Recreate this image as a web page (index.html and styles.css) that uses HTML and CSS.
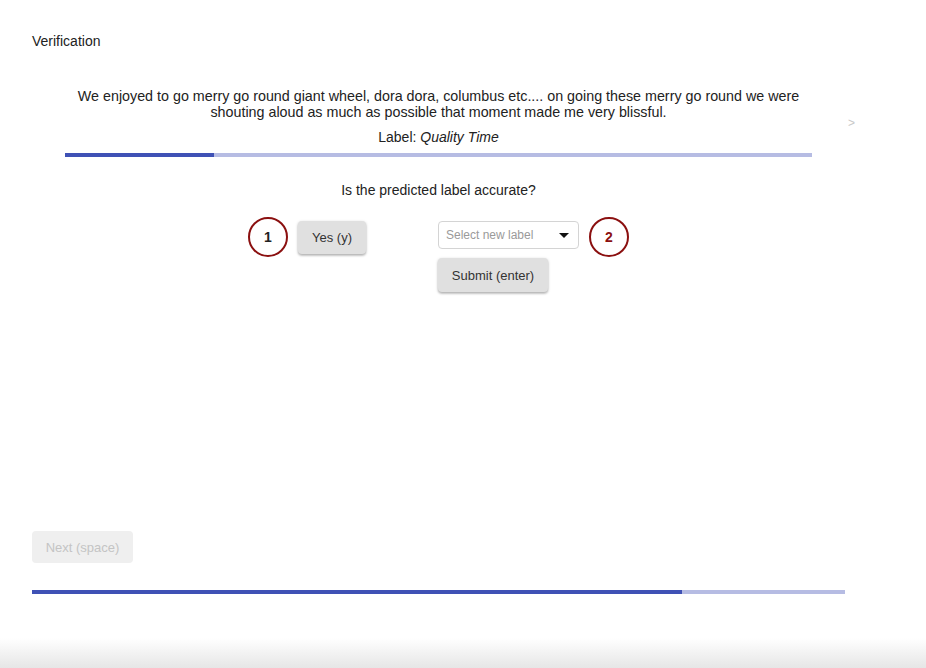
FILE: index.html
```html
<!DOCTYPE html>
<html>
<head>
<meta charset="utf-8">
<link rel="stylesheet" href="styles.css">
</head>
<body>
<div class="page">
  <div class="title">Verification</div>
  <div class="card">
    <p class="text">We enjoyed to go merry go round giant wheel, dora dora, columbus etc.... on going these merry go round we were shouting aloud as much as possible that moment made me very blissful.</p>
    <p class="label">Label: <em>Quality Time</em></p>
    <div class="bar inner"><div class="fill" style="width:20%"></div></div>
    <span class="arrow">&gt;</span>
    <p class="question">Is the predicted label accurate?</p>
    <div class="actions">
      <div class="group">
        <div class="badge">1</div>
        <button class="btn yes">Yes (y)</button>
      </div>
      <div class="group right">
        <div class="col">
          <div class="select"><span class="ph">Select new label</span><span class="caret"></span></div>
          <button class="btn submit">Submit (enter)</button>
        </div>
        <div class="badge">2</div>
      </div>
    </div>
  </div>
  <button class="btn next" disabled>Next (space)</button>
  <div class="bar outer"><div class="fill" style="width:80%"></div></div>
</div>
<div class="shade"></div>
</body>
</html>
```
FILE: styles.css
```css
html, body { margin: 0; padding: 0; background: #fff; }
body { font-family: "Liberation Sans", Arial, sans-serif; color: #222; width: 926px; height: 668px; overflow: hidden; position: relative; }
.page { width: 813px; padding: 33px 0 0 32px; }
.title { font-size: 14px; line-height: 16px; height: 16px; color: #222; }
.card { position: relative; padding: 0 33px; margin-top: 39px; }
.text { margin: 0; text-align: center; font-size: 14.3px; line-height: 16px; color: #222; }
.label { margin: 9px 0 0; text-align: center; font-size: 14px; line-height: 16px; color: #222; }
.label em { font-style: italic; }
.bar { height: 4px; background: #b6bce3; }
.bar .fill { height: 100%; background: #3f51b5; }
.inner { margin-top: 8px; }
.arrow { position: absolute; left: 816px; top: 28px; font-size: 12px; color: #c8c8c8; }
.question { margin: 25px 0 0; text-align: center; font-size: 14px; line-height: 16px; color: #222; }
.actions { display: flex; justify-content: center; align-items: flex-start; gap: 72px; margin-top: 23px; }
.group { display: flex; align-items: flex-start; gap: 10px; }
.badge { width: 36px; height: 36px; border: 2px solid #8b1010; border-radius: 50%; display: flex; align-items: center; justify-content: center; font-weight: bold; font-size: 14px; color: #8b1010; margin-top: -4px; }
.group:first-child .badge { color: #222; }
.col { display: flex; flex-direction: column; align-items: flex-start; gap: 9px; }
.btn { font-family: "Liberation Sans", Arial, sans-serif; font-size: 13px; color: #333; background: #e0e0e0; border: none; border-radius: 4px; box-shadow: 0 1px 3px rgba(0,0,0,0.25), 0 2px 2px rgba(0,0,0,0.12); padding: 0 14px; height: 33px; }
.yes { width: 68px; padding: 0; }
.submit { width: 110px; height: 34px; padding: 0; }
.select { height: 26px; border: 1px solid #d4d4d4; border-radius: 4px; display: flex; align-items: center; justify-content: space-between; padding: 0 9px 0 7px; box-sizing: content-box; width: 123px; }
.ph { font-size: 12px; color: #9a9a9a; }
.caret { width: 0; height: 0; border-left: 5px solid transparent; border-right: 5px solid transparent; border-top: 5px solid #111; }
.next { margin-top: 239px; width: 101px; height: 32px; padding: 0; background: #efefef; color: #c4c4c4; box-shadow: none; }
.outer { margin-top: 27px; }
.shade { position: absolute; left: 0; right: 0; bottom: 0; height: 30px; background: linear-gradient(to bottom, rgba(230,230,230,0), #e6e6e6); }
```
